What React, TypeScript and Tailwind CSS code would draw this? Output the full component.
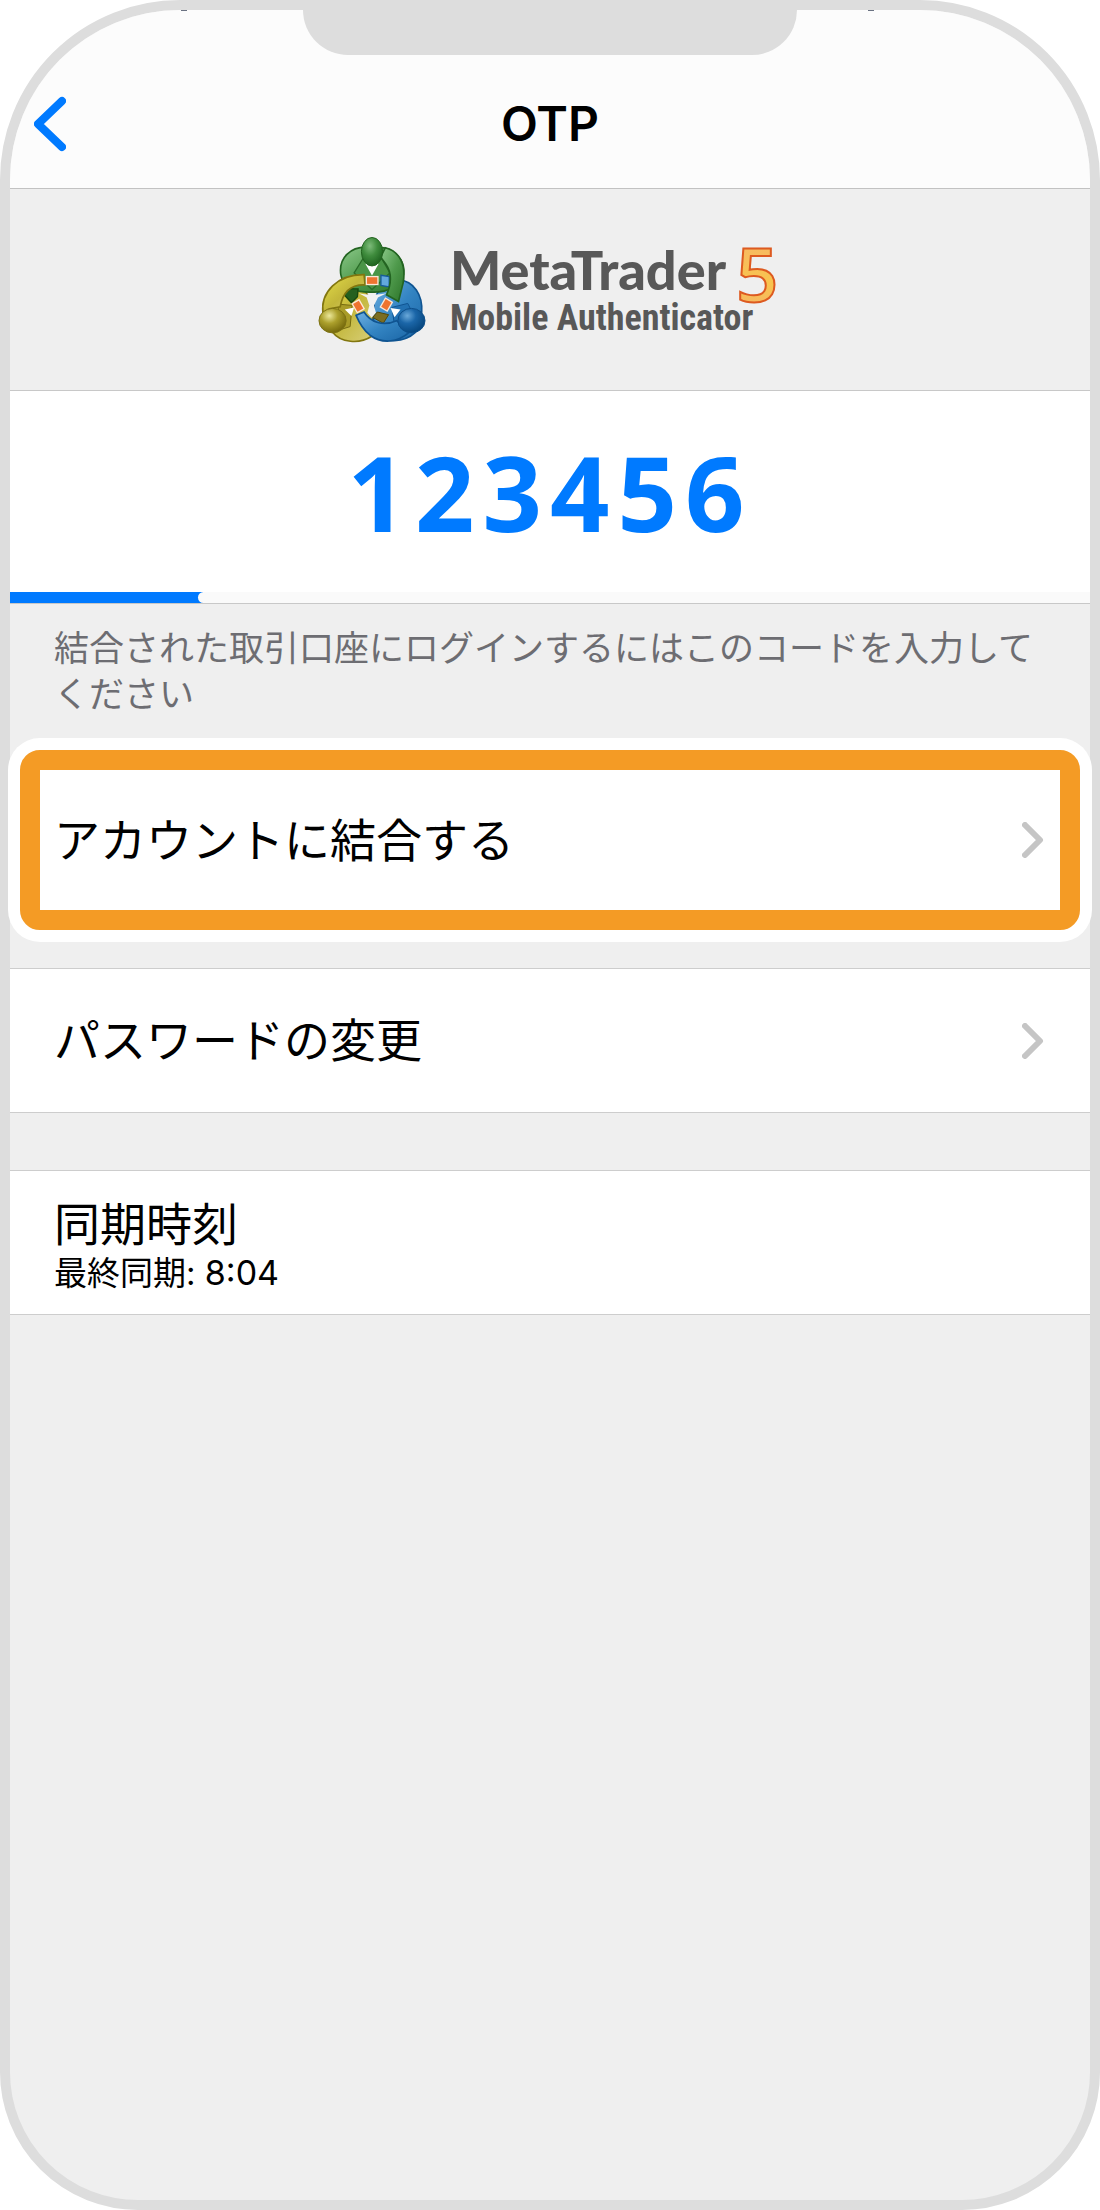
import type { ReactNode } from 'react'

const JP = "font-['Inter','Noto_Sans_CJK_JP',sans-serif]"

function LogoMark() {
  return (
    <svg viewBox="25 31 326 322" className="h-[107px] w-[108px]" aria-hidden="true">
      <defs>
        <linearGradient id="green" x1="0" y1="0" x2="1" y2="1">
          <stop offset="0" stopColor="#8cc98a" />
          <stop offset="0.5" stopColor="#4f9a4c" />
          <stop offset="1" stopColor="#2c7429" />
        </linearGradient>
        <linearGradient id="yellow" x1="0" y1="0" x2="1" y2="1">
          <stop offset="0" stopColor="#e6e04a" />
          <stop offset="0.5" stopColor="#c3b73a" />
          <stop offset="1" stopColor="#d8cf7a" />
        </linearGradient>
        <linearGradient id="blue" x1="0" y1="0" x2="1" y2="1">
          <stop offset="0" stopColor="#6fb0e2" />
          <stop offset="0.5" stopColor="#3384c2" />
          <stop offset="1" stopColor="#1b66a6" />
        </linearGradient>
        <radialGradient id="greenHead" cx="0.4" cy="0.3" r="0.7">
          <stop offset="0" stopColor="#7dbb7a" />
          <stop offset="0.5" stopColor="#3f8c3d" />
          <stop offset="1" stopColor="#1f6420" />
        </radialGradient>
        <radialGradient id="yellowHead" cx="0.38" cy="0.3" r="0.7">
          <stop offset="0" stopColor="#ece89a" />
          <stop offset="0.45" stopColor="#aca02c" />
          <stop offset="1" stopColor="#766a0c" />
        </radialGradient>
        <radialGradient id="blueHead" cx="0.35" cy="0.3" r="0.7">
          <stop offset="0" stopColor="#6aa9da" />
          <stop offset="0.45" stopColor="#1b66a8" />
          <stop offset="1" stopColor="#084880" />
        </radialGradient>
      </defs>

      {/* yellow trader */}
      <path d="M40 262C36 200 82 166 128 172C168 180 184 218 184 250C192 290 200 318 186 334C150 358 92 352 70 322Z" fill="url(#yellow)" stroke="#82760f" strokeWidth="5" />
      <path d="M84 236L128 240L122 304L96 312Z" fill="#a99c28" stroke="#756a10" strokeWidth="3" />
      <path d="M106 252L134 246L126 272Z" fill="#fff" />

      {/* blue trader */}
      <path d="M194 252C190 206 222 166 268 163C314 166 342 208 338 262L318 322C286 352 226 354 190 332Z" fill="url(#blue)" stroke="#0f5491" strokeWidth="5" />
      <path d="M248 246L296 234L306 254L280 310L256 300Z" fill="#2271b2" stroke="#0f5491" strokeWidth="3" />
      <path d="M244 248L274 252L256 276Z" fill="#fff" />

      {/* green trader */}
      <path d="M94 148C86 96 124 62 174 64L206 64C256 66 290 104 283 146C276 178 236 202 188 200C138 202 100 184 94 148Z" fill="url(#green)" stroke="#236421" strokeWidth="5" />
      <path d="M112 190L146 190L144 214L126 232L106 210Z" fill="#24601f" stroke="#17480f" strokeWidth="4" />
      <path d="M160 100L134 142L188 192L242 142L218 100Z" fill="#4a9547" stroke="#2a6c28" strokeWidth="4" />
      <path d="M168 114L208 114L188 150Z" fill="#fff" />

      {/* table between the three */}
      <path d="M148 203C166 208 210 208 232 203L206 216L194 240L200 262L188 278L174 262L180 240L172 216Z" fill="#f1f1f1" />

      {/* arms */}
      <path d="M40 264C32 200 84 146 164 147L167 178C124 176 100 200 92 244L60 250Z" fill="url(#yellow)" stroke="#82760f" strokeWidth="5" />
      <path d="M215 149L240 153L240 184L215 180Z" fill="#63a9de" stroke="#175c9a" strokeWidth="4" />
      <path d="M228 66C270 76 292 116 282 172L268 228L232 208C246 176 248 142 230 116L214 94Z" fill="url(#green)" stroke="#236421" strokeWidth="5" />
      <path d="M204 260L238 268L222 294L190 276Z" fill="#7b6d22" stroke="#544808" strokeWidth="3" />
      <path d="M140 270L164 260C184 292 222 304 262 286L302 320C262 356 214 354 182 330C162 314 150 294 140 270Z" fill="url(#blue)" stroke="#0f5491" strokeWidth="5" />

      {/* cards */}
      <g fill="#ef7430" stroke="#fbe9d8" strokeWidth="4">
        <rect x="171" y="153" width="35" height="24" />
        <rect x="134" y="227" width="24" height="31" transform="rotate(-30 146 242)" />
        <rect x="219" y="222" width="24" height="31" transform="rotate(30 231 238)" />
      </g>

      {/* heads */}
      <ellipse cx="188" cy="78" rx="32" ry="43" fill="url(#greenHead)" stroke="#22631f" strokeWidth="3" />
      <ellipse cx="69" cy="286" rx="41" ry="37" fill="url(#yellowHead)" stroke="#7d7214" strokeWidth="3" />
      <ellipse cx="307" cy="286" rx="41" ry="37" fill="url(#blueHead)" stroke="#0d4f8a" strokeWidth="3" />
    </svg>
  )
}

function Logo() {
  return (
    <div className="flex items-center gap-6 pr-1 text-[#585858]">
      <LogoMark />
      <div>
        <div className="flex gap-3">
          <span className="font-['Lato',sans-serif] text-[54px] leading-[52px] font-black">MetaTrader</span>
          <svg viewBox="0 0 40 56" className="h-14 w-10 overflow-visible" role="img" aria-label="5">
            <defs>
              <linearGradient id="five" x1="0" y1="0" x2="0" y2="1">
                <stop offset="0" stopColor="#f7b46e" />
                <stop offset="0.6" stopColor="#f8c44e" />
                <stop offset="1" stopColor="#f5ab72" />
              </linearGradient>
            </defs>
            <text
              x="-2"
              y="58"
              fill="url(#five)"
              stroke="#dd5a20"
              strokeWidth="2"
              className="font-['Open_Sans',sans-serif] text-[74px] font-semibold"
            >
              5
            </text>
          </svg>
        </div>
        <div className="font-['Liberation_Sans_Narrow','Roboto_Condensed','Roboto',sans-serif] text-[36px] leading-[36px] font-bold">
          Mobile Authenticator
        </div>
      </div>
    </div>
  )
}

function Chevron() {
  return (
    <svg viewBox="0 0 22 36" className="h-9 w-[22px] shrink-0" aria-hidden="true">
      <path d="M3 3L18 18L3 33" fill="none" stroke="#c5c5c5" strokeWidth="6" strokeLinecap="round" strokeLinejoin="round" />
    </svg>
  )
}

function Row({ children }: { children: ReactNode }) {
  return (
    <div className="flex h-[145px] items-center border-y border-[#cdcdcd] bg-white pr-[46px] pl-11">
      {children}
    </div>
  )
}

export default function App() {
  return (
    <div className="bg-white">
      <main
        className={`${JP} relative flex min-h-screen flex-col rounded-t-[180px] rounded-b-[138px] border-10 border-[#dddddd] bg-[#efefef] text-black`}
      >
        {/* notch */}
        <div className="absolute top-0 left-1/2 h-[45px] w-[494px] -translate-x-1/2 rounded-b-[45px] bg-[#dddddd]" />
        {/* clipped status bar */}
        <div className="absolute top-0 left-[171px] h-px w-1.5 bg-gray-500" />
        <div className="absolute top-0 right-[216px] h-px w-1.5 bg-gray-500" />

        <header className="grid h-[179px] grid-cols-3 items-end rounded-t-[170px] border-b border-[#c2c2c2] bg-[#fcfcfc] pb-[34px]">
          <button type="button" aria-label="戻る" className="ml-6 w-8">
            <svg viewBox="0 0 32 60" className="h-[60px] w-8">
              <path d="M28 7L4 30L28 53" fill="none" stroke="#007aff" strokeWidth="8" strokeLinecap="round" strokeLinejoin="round" />
            </svg>
          </button>
          <h1 className="text-center text-[48px] leading-[60px] font-semibold">OTP</h1>
        </header>

        <div className="flex h-[202px] items-center justify-center border-b border-[#c8c8c8]">
          <Logo />
        </div>

        <section className="border-b border-[#c8c8c8] bg-white">
          <p className="text-center font-['Open_Sans',sans-serif] text-[104px] leading-[201px] font-bold tracking-[8px] text-[#007aff]">
            123456
          </p>
          <div className="flex h-[11px] bg-[#007aff]">
            <div style={{ width: '17.4%' }} />
            <div className="flex-1 rounded-l-md bg-[#fafafa]" />
          </div>
        </section>

        <p className="px-11 pt-[21px] text-[35px] leading-[46px] text-[#6d6d72]">
          結合された取引口座にログインするにはこのコードを入力してください
        </p>

        <button
          type="button"
          className="mx-[10px] mt-[33px] flex h-[180px] items-center justify-between rounded-[20px] border-20 border-[#f49b25] bg-white pr-4 pl-[14px] text-left text-[46px] ring-12 ring-white"
        >
          アカウントに結合する
          <Chevron />
        </button>

        <div className="mt-[38px]">
          <Row>
            <button type="button" className="flex h-full flex-1 items-center justify-between text-left text-[46px]">
              パスワードの変更
              <Chevron />
            </button>
          </Row>
        </div>

        <div className="mt-[57px]">
          <Row>
            <div className="pt-2">
              <h2 className="text-[46px] leading-[52px]">同期時刻</h2>
              <p className="text-[33px] leading-[46px]">
                最終同期: <span className="text-[34px]">8:04</span>
              </p>
            </div>
          </Row>
        </div>
      </main>
    </div>
  )
}
